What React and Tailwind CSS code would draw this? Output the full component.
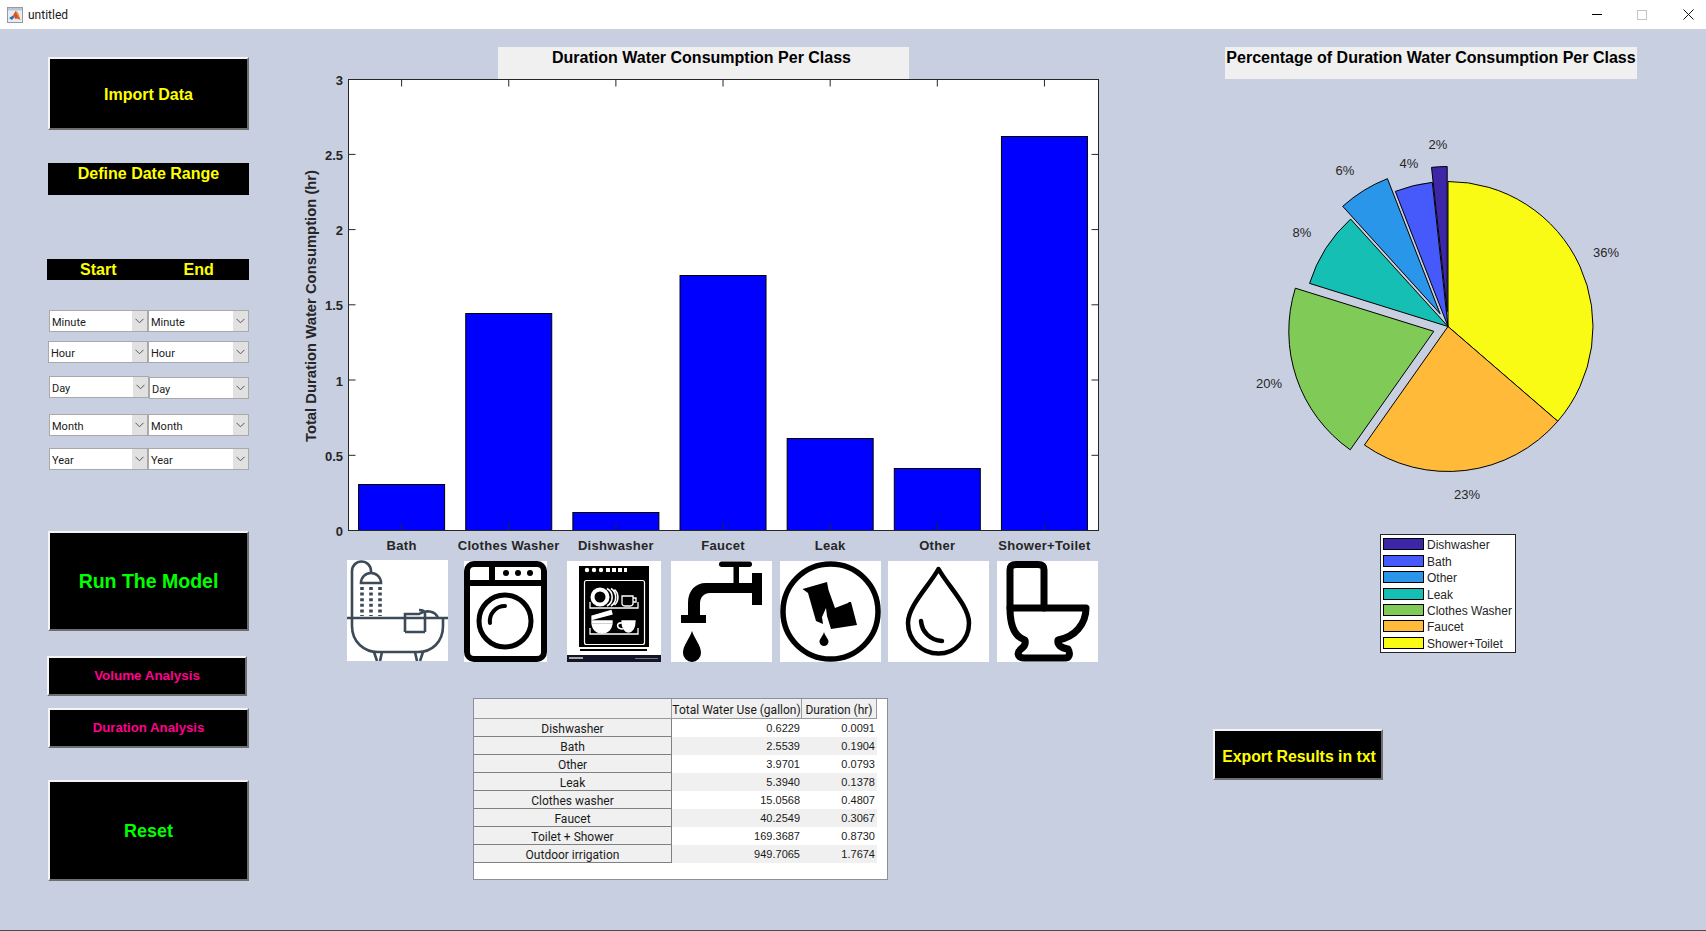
import React from "react";

const bars = [
  { label: "Bath", top: 484.5 },
  { label: "Clothes Washer", top: 313.5 },
  { label: "Dishwasher", top: 512.5 },
  { label: "Faucet", top: 275.5 },
  { label: "Leak", top: 438.5 },
  { label: "Other", top: 468.5 },
  { label: "Shower+Toilet", top: 136.5 },
];

const yTicks = [
  { label: "0", y: 530.5 },
  { label: "0.5", y: 455.3 },
  { label: "1", y: 380 },
  { label: "1.5", y: 304.8 },
  { label: "2", y: 229.6 },
  { label: "2.5", y: 154.4 },
  { label: "3", y: 79.5 },
];

const slices = [
  { name: "Shower+Toilet", color: "#f9fb15", from: 0, to: 130.8, off: 0 },
  { name: "Faucet", color: "#feba38", from: 130.8, to: 215.2, off: 0 },
  { name: "Clothes Washer", color: "#80cb58", from: 215.2, to: 287.3, off: 15 },
  { name: "Leak", color: "#16bfb4", from: 287.3, to: 317.8, off: 0 },
  { name: "Other", color: "#2a96e9", from: 317.8, to: 338.7, off: 15 },
  { name: "Bath", color: "#4659fb", from: 338.7, to: 353.8, off: 0 },
  { name: "Dishwasher", color: "#3e26a8", from: 353.8, to: 360, off: 15 },
];

const pieLabels = [
  { text: "36%", x: 1606, y: 252 },
  { text: "23%", x: 1467, y: 494 },
  { text: "20%", x: 1269, y: 383 },
  { text: "8%", x: 1302, y: 232 },
  { text: "6%", x: 1345, y: 170 },
  { text: "4%", x: 1409, y: 163 },
  { text: "2%", x: 1438, y: 144 },
];

const tableRows = [
  ["Dishwasher", "0.6229", "0.0091"],
  ["Bath", "2.5539", "0.1904"],
  ["Other", "3.9701", "0.0793"],
  ["Leak", "5.3940", "0.1378"],
  ["Clothes washer", "15.0568", "0.4807"],
  ["Faucet", "40.2549", "0.3067"],
  ["Toilet + Shower", "169.3687", "0.8730"],
  ["Outdoor irrigation", "949.7065", "1.7674"],
];

const wedgePath = ({ from, to, off }) => {
  const cx = 1448;
  const cy = 326.5;
  const r = 145;
  const mid = (((from + to) / 2) * Math.PI) / 180;
  const ox = cx + off * Math.sin(mid);
  const oy = cy - off * Math.cos(mid);
  const a = (from * Math.PI) / 180;
  const b = (to * Math.PI) / 180;
  const large = to - from > 180 ? 1 : 0;
  return `M${ox} ${oy} L${ox + r * Math.sin(a)} ${oy - r * Math.cos(a)} A${r} ${r} 0 ${large} 1 ${ox + r * Math.sin(b)} ${oy - r * Math.cos(b)} Z`;
};

const Dropdown = ({ label, className }) => (
  <div className={`flex h-[22px] items-stretch border border-[#a9a9a9] bg-white ${className}`}>
    <span className="flex-1 pl-[2px] text-[11px] leading-[23px] text-[#1a1a1a] font-['Roboto',sans-serif]">
      {label}
    </span>
    <span className="flex w-[15px] items-center justify-center bg-[#e1e1e1]">
      <svg width="9" height="6" viewBox="0 0 9 6" fill="none" stroke="#555" strokeWidth="1">
        <path d="M0.5 0.8 L4.5 4.8 L8.5 0.8" />
      </svg>
    </span>
  </div>
);

const GuiButton = ({ children, className }) => (
  <button
    type="button"
    className={`flex items-center justify-center border-2 border-t-[#f4f4f4] border-l-[#f4f4f4] border-r-[#6e6e6e] border-b-[#6e6e6e] bg-black font-bold ${className}`}
  >
    {children}
  </button>
);

const BathIcon = () => (
  <svg viewBox="0 0 101 101" className="h-full w-full" fill="none" stroke="#3d4a57" strokeWidth="2.6">
    <rect width="101" height="101" fill="#fff" stroke="none" />
    <path d="M0 58 H101" />
    <path d="M5 58 V66 C5 82 17 92 31 92 H71 C85 92 96 82 96 66 V58" />
    <path d="M27 92 L30 101 M35 92 L33 101 M68 92 L70 101 M76 92 L73 101" />
    <path d="M5 58 V11 A9.5 9.5 0 0 1 24 11 V14" />
    <path d="M14 23 A10 10 0 0 1 34 23 Z" />
    <path d="M58 72 V54 H72 C78 50 88 50 91 58 M78 72 V54 C78 51 75 50 72 50 M58 72 H78" />
    <path d="M15 27 V56 M24 27 V56 M33 27 V56" strokeWidth="3.6" strokeDasharray="3 2.6" />
  </svg>
);

const WasherIcon = () => (
  <svg viewBox="0 0 83 101" className="h-full w-full">
    <rect width="83" height="101" fill="#fff" />
    <rect x="3" y="3" width="77" height="95" rx="7" fill="#fff" stroke="#000" strokeWidth="6" />
    <rect x="3" y="19" width="77" height="6" />
    <rect x="25" y="3" width="6" height="20" />
    <circle cx="42" cy="12" r="3" />
    <circle cx="54" cy="12" r="3" />
    <circle cx="66" cy="12" r="3" />
    <circle cx="41" cy="60" r="26" fill="none" stroke="#000" strokeWidth="5" />
    <path d="M26 62 A15 15 0 0 1 41 45" fill="none" stroke="#000" strokeWidth="4" strokeLinecap="round" />
  </svg>
);

const DishwasherIcon = () => (
  <svg viewBox="0 0 94 101" className="h-full w-full">
    <rect width="94" height="101" fill="#fff" />
    <rect x="12" y="5" width="70" height="81" />
    <rect x="13" y="88" width="67" height="2" />
    <rect x="0" y="94" width="94" height="7" fill="#141428" />
    <rect x="2" y="96" width="14" height="2" fill="#aaa" />
    <rect x="68" y="97" width="23" height="1" fill="#777" />
    <g fill="#fff">
      <circle cx="20" cy="9" r="2.2" />
      <circle cx="27" cy="9" r="2.2" />
      <circle cx="34" cy="9" r="2.2" />
      <rect x="39" y="7" width="4" height="4" />
      <rect x="45" y="7" width="4" height="4" />
      <rect x="51" y="7" width="4" height="4" />
      <rect x="57" y="7" width="3" height="4" />
    </g>
    <rect x="17.5" y="19.5" width="60" height="64" rx="2" fill="none" stroke="#fff" strokeWidth="1.2" />
    <g fill="none" stroke="#fff" strokeWidth="1.3">
      <path d="M23 41 V47 H71 V41" />
      <path d="M23 67 V73 H71 V67" />
      <circle cx="33" cy="36" r="7.5" strokeWidth="4" />
      <path d="M40 27.5 A10 10 0 0 1 40 45 M44 27.5 A10.5 10.5 0 0 1 44 45 M47.5 28.5 A10.5 10.5 0 0 1 47.5 44" strokeWidth="1.6" />
      <path d="M55 35 H66 V43 A3 3 0 0 1 63 45 H58 A3 3 0 0 1 55 43 Z M66 37 H69 V41 H66" />
      <path d="M25 55 L44 49.5 L45 53 L25 58.5 Z" fill="#fff" />
      <path d="M25 60 H45 L45 61.5 H25 Z" fill="#fff" />
      <path d="M25 63 H45 C44 69 40 72 35 72 C30 72 26 69 25 63 Z" fill="#fff" />
      <path d="M55 60 H68 C68 67 65 71 61.5 71 C58 71 55 67 55 60 Z" fill="#fff" />
      <path d="M55 62 C49 61 49 68 56 68" strokeWidth="1.6" />
    </g>
  </svg>
);

const FaucetIcon = () => (
  <svg viewBox="0 0 101 101" className="h-full w-full">
    <rect width="101" height="101" fill="#fff" />
    <rect x="48" y="0.5" width="33" height="5.5" rx="2.7" />
    <rect x="62.5" y="5" width="5.5" height="20" />
    <rect x="81" y="12" width="10" height="32" />
    <path d="M81 22 H35 C24 22 17 30 17 42 V55 H29 V43 C29 36 33 32 39 32 H81 Z" />
    <rect x="10" y="54" width="25" height="8" />
    <path d="M21 70 C18 79 12 84 12 92 A9 9 0 0 0 30 92 C30 84 24 79 21 70 Z" />
  </svg>
);

const LeakIcon = () => (
  <svg viewBox="0 0 101 101" className="h-full w-full">
    <rect width="101" height="101" fill="#fff" />
    <circle cx="50.5" cy="50.5" r="47.5" fill="none" stroke="#000" strokeWidth="5.5" />
    <path d="M22.5 28 L47 21 L48.5 29 L55 47 L68 42 L69 41 L71 41 L77 64 L51 68 L47 55 L46 47 L42 56 L43 63 L36 60 L28 32 Z" />
    <path d="M44 71 C43 75 39.5 78 39.5 80.5 A4.5 4.5 0 0 0 48.5 80.5 C48.5 78 45 75 44 71 Z" />
  </svg>
);

const DropIcon = () => (
  <svg viewBox="0 0 101 101" className="h-full w-full" fill="none" stroke="#000" strokeWidth="4.5" strokeLinecap="round">
    <rect width="101" height="101" fill="#fff" stroke="none" />
    <path d="M50.5 8 C41 25 20 45 20 62 A30.5 30.5 0 0 0 81 62 C81 45 60 25 50.5 8 Z" strokeLinejoin="round" />
    <path d="M33 60 C34 71 42 79 54 80" />
  </svg>
);

const ToiletIcon = () => (
  <svg viewBox="0 0 101 101" className="h-full w-full" fill="none" stroke="#000" strokeWidth="7" strokeLinejoin="round" strokeLinecap="round">
    <rect width="101" height="101" fill="#fff" stroke="none" />
    <path d="M13 47 V9 C13 5 15 3.5 19 3.5 H41 C45 3.5 47 5 47 9 V47" />
    <path d="M13 47 H89 C89 63 78 76 61 79 C60 84 64 87 71 88 C74 93 72 97 68 97 H27 C21 97 19 92 24 88 C27 86 29 83 28 79 C18 76 13 65 13 47 Z" />
  </svg>
);

const App = () => (
  <div className="flex h-[931px] w-[1706px] flex-col overflow-hidden border-b border-[#4a4a4a] bg-[#c8cfe0] font-['Liberation_Sans',Arial,sans-serif]">
    <div className="flex h-[29px] shrink-0 items-center bg-white pl-[7px]">
      <svg width="16" height="16" viewBox="0 0 16 16">
        <rect x="0.5" y="0.5" width="15" height="15" fill="#e8edf3" stroke="#9a9a9a" />
        <rect x="1" y="1" width="14" height="2.5" fill="#b9c6d6" />
        <path d="M2 11 L6 8.5 L7.5 10 L5 13 Z" fill="#2f6fb5" />
        <path d="M6 8.5 L8.5 4 L11 6 L13.5 13 L10.5 11.5 L8 12 L7.5 10 Z" fill="#d9531e" />
        <path d="M8.5 4 L10 4.5 L13.5 13 L11 9 Z" fill="#f2a33a" />
      </svg>
      <span className="ml-[5px] text-[12px] text-[#1a1a1a] font-['Roboto',sans-serif]">untitled</span>
      <div className="ml-auto flex items-center">
        <span className="h-px w-[10px] bg-black" />
        <span className="ml-[35px] h-[10px] w-[10px] border border-[#c4c4c4]" />
        <svg className="ml-[36px] mr-[12px]" width="11" height="11" viewBox="0 0 11 11" stroke="#111" strokeWidth="1">
          <path d="M0.5 0.5 L10.5 10.5 M10.5 0.5 L0.5 10.5" />
        </svg>
      </div>
    </div>

    <div className="flex min-h-0 flex-1">
      {/* left controls */}
      <div className="ml-[48px] flex w-[201px] shrink-0 flex-col">
        <GuiButton className="mt-[28px] h-[73px] pt-[2px] text-[16px] text-[#ffff00]">Import Data</GuiButton>
        <div className="mt-[33px] flex h-[32px] justify-center bg-black pt-[1px] text-[16px] font-bold leading-[20px] text-[#ffff00]">
          Define Date Range
        </div>
        <div className="-ml-px mt-[64px] flex h-[21px] w-[202px] bg-black text-[16px] font-bold leading-[22px] text-[#ffff00]">
          <span className="ml-[33px]">Start</span>
          <span className="ml-[67px]">End</span>
        </div>
        <div className="mt-[30px] flex">
          <Dropdown label="Minute" className="ml-px w-[99px]" />
          <Dropdown label="Minute" className="w-[101px]" />
        </div>
        <div className="mt-[9px] flex">
          <Dropdown label="Hour" className="w-[100px]" />
          <Dropdown label="Hour" className="w-[101px]" />
        </div>
        <div className="mt-[13px] flex items-start">
          <Dropdown label="Day" className="ml-px w-[100px]" />
          <Dropdown label="Day" className="mt-px w-[100px]" />
        </div>
        <div className="mt-[15px] flex">
          <Dropdown label="Month" className="ml-px w-[99px]" />
          <Dropdown label="Month" className="w-[101px]" />
        </div>
        <div className="mt-[12px] flex">
          <Dropdown label="Year" className="ml-px w-[99px]" />
          <Dropdown label="Year" className="w-[101px]" />
        </div>
        <GuiButton className="mt-[61px] h-[100px] pt-[2px] text-[19.5px] text-[#00ff00]">Run The Model</GuiButton>
        <GuiButton className="-ml-px mt-[25px] h-[40px] w-[200px] text-[13.4px] text-[#ff0090]">Volume Analysis</GuiButton>
        <GuiButton className="mt-[12px] h-[40px] text-[13.2px] text-[#ff0090]">Duration Analysis</GuiButton>
        <GuiButton className="mt-[32px] h-[101px] pt-[2px] text-[18px] text-[#00ff00]">Reset</GuiButton>
      </div>

      {/* bar chart, icons and table */}
      <div className="ml-[46px] flex w-[810px] shrink-0 flex-col">
        <div className="ml-[203px] mt-[18px] flex h-[32px] w-[411px] justify-center bg-[#f0f0f0] pr-[4px] pt-[1px] text-[16px] font-bold leading-[20px] text-black">
          Duration Water Consumption Per Class
        </div>
        <svg className="block h-[476px] w-[810px] overflow-visible" viewBox="295 79 810 476">
          <rect x="348.5" y="79.5" width="750" height="451" fill="#fff" />
          {bars.map((bar, i) => {
            const cx = 401.6 + i * 107.14;
            return (
              <rect key={bar.label} x={cx - 43} y={bar.top} width="86" height={530.5 - bar.top} fill="#0000ff" stroke="#000" strokeWidth="1" />
            );
          })}
          <rect x="348.5" y="79.5" width="750" height="451" fill="none" stroke="#262626" strokeWidth="1" />
          {bars.map((bar, i) => {
            const cx = 401.6 + i * 107.14;
            return (
              <g key={bar.label}>
                <path d={`M${cx} 79.5 v7 M${cx} 530.5 v-7`} stroke="#262626" strokeWidth="1" />
                <text x={cx} y="550" textAnchor="middle" fontSize="13" fontWeight="700" fill="#262626" letterSpacing="0.3">
                  {bar.label}
                </text>
              </g>
            );
          })}
          {yTicks.map((tick) => (
            <g key={tick.label}>
              <path d={`M348.5 ${tick.y} h7 M1098.5 ${tick.y} h-7`} stroke="#262626" strokeWidth="1" />
              <text x="343" y={tick.y + 5.5} textAnchor="end" fontSize="13" fontWeight="700" fill="#262626">
                {tick.label}
              </text>
            </g>
          ))}
          <text transform="translate(316 306) rotate(-90)" textAnchor="middle" fontSize="14.8" fontWeight="700" fill="#262626">
            Total Duration Water Consumption (hr)
          </text>
        </svg>
        <div className="mt-[6px] flex h-[101px] pl-[52px]">
          <div className="h-[101px] w-[101px] -translate-y-px"><BathIcon /></div>
          <div className="ml-[16px] h-[101px] w-[83px]"><WasherIcon /></div>
          <div className="ml-[20px] h-[101px] w-[94px]"><DishwasherIcon /></div>
          <div className="ml-[10px] h-[101px] w-[101px]"><FaucetIcon /></div>
          <div className="ml-[8px] h-[101px] w-[101px]"><LeakIcon /></div>
          <div className="ml-[7px] h-[101px] w-[101px]"><DropIcon /></div>
          <div className="ml-[8px] h-[101px] w-[101px]"><ToiletIcon /></div>
        </div>
        <div className="ml-[178px] mt-[36px] h-[182px] w-[415px] border border-[#8c8f99] bg-white font-['Roboto',sans-serif] text-[12px] text-[#1a1a1a]">
          <div className="flex h-[20px] w-[403px] bg-[#f0f0f0] leading-[23px]">
            <div className="w-[198px] border-b border-r border-[#9a9a9a]" />
            <div className="w-[130px] border-b border-r border-[#9a9a9a] text-center">Total Water Use (gallon)</div>
            <div className="flex-1 border-b border-r border-[#9a9a9a] text-center">Duration (hr)</div>
          </div>
          {tableRows.map((row, i) => (
            <div key={row[0]} className="flex h-[18px] w-[403px]">
              <div className="w-[198px] border-b border-r border-[#808080] bg-[#f0f0f0] text-center leading-[21px]">{row[0]}</div>
              <div className={`w-[130px] pr-[2px] text-right text-[11px] leading-[18px] font-['Liberation_Sans',sans-serif] ${i % 2 === 1 ? "bg-[#f0f0f0]" : "bg-white"}`}>{row[1]}</div>
              <div className={`flex-1 pr-[2px] text-right text-[11px] leading-[18px] font-['Liberation_Sans',sans-serif] ${i % 2 === 1 ? "bg-[#f0f0f0]" : "bg-white"}`}>{row[2]}</div>
            </div>
          ))}
        </div>
      </div>

      {/* pie chart, legend and export */}
      <div className="flex min-w-0 flex-1 flex-col">
        <div className="ml-[120px] mt-[18px] flex h-[32px] w-[412px] justify-center whitespace-nowrap bg-[#f0f0f0] pt-[1px] text-[16px] font-bold leading-[20px] text-black">
          Percentage of Duration Water Consumption Per Class
        </div>
        <svg className="ml-[145px] mt-[41px] block h-[390px] w-[380px] shrink-0" viewBox="1250 120 380 390">
          {slices.map((s) => (
            <path key={s.name} d={wedgePath(s)} fill={s.color} stroke="#000" strokeWidth="1" strokeLinejoin="round" />
          ))}
          {pieLabels.map((l) => (
            <text key={l.text} x={l.x} y={l.y + 4.5} textAnchor="middle" fontSize="13" fill="#262626">
              {l.text}
            </text>
          ))}
        </svg>
        <div className="ml-[275px] mt-[24px] flex h-[119px] w-[136px] flex-col border border-[#262626] bg-white pl-[2px] pt-[1px] text-[12px] text-[#262626]">
          {[...slices].reverse().map((s) => (
            <div key={s.name} className="flex h-[16.45px] items-center whitespace-nowrap">
              <span className="h-[12px] w-[41px] shrink-0 border border-black" style={{ backgroundColor: s.color }} />
              <span className="ml-[3px] pt-[2px]">{s.name}</span>
            </div>
          ))}
        </div>
        <GuiButton className="ml-[108px] mt-[76px] h-[51px] w-[170px] pl-[2px] pt-[4px] text-[15.8px] text-[#ffff00]">Export Results in txt</GuiButton>
      </div>
    </div>
  </div>
);

export default App;
